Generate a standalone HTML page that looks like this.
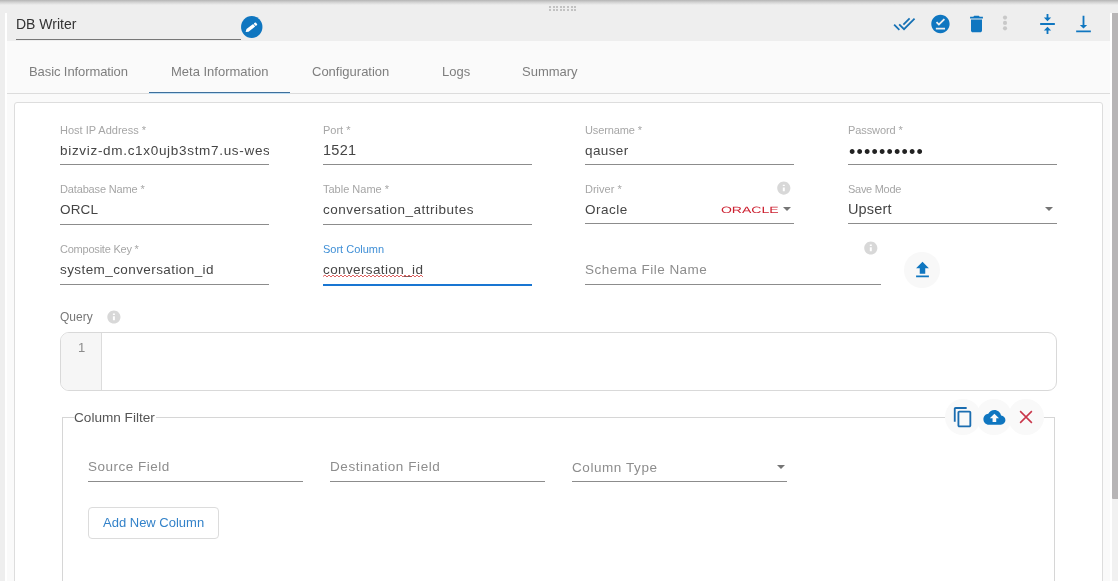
<!DOCTYPE html>
<html><head><meta charset="utf-8"><title>DB Writer</title>
<style>
*{box-sizing:border-box;margin:0;padding:0}
html,body{width:1118px;height:581px;overflow:hidden;background:#eee;font-family:"Liberation Sans",sans-serif;}
.a{position:absolute}
.t{position:absolute;white-space:nowrap;line-height:1;transform-origin:0 0}
.lbl{font-size:11px;color:#a6a6a6}
.val{font-size:13.5px;margin-top:1px;color:#454545}
.ph{font-size:13.5px;margin-top:1px;color:#8d8d8d}
.ul{position:absolute;height:1px;background:#8c8c8c}
.tab{font-size:13px;color:#7e7e7e}

.tri{width:0;height:0;border-left:4px solid transparent;border-right:4px solid transparent;border-top:4px solid #757575}
.info{width:13px;height:13px;border-radius:50%;background:#d0d0d0;color:#fff;text-align:center}
.info i{display:block;font:bold 10px/13px "Liberation Serif",serif;font-style:normal}
</style></head><body><div id="root" style="position:absolute;left:0;top:0;width:1118px;height:581px;will-change:transform">
<!-- top shadow -->
<div class="a" style="left:0;top:0;width:1118px;height:5px;background:linear-gradient(#b4b4b4,#cfcfcf 40%,#eee)"></div>
<!-- white strip -->
<div class="a" style="left:5px;top:13px;width:2px;height:568px;background:#fff"></div>
<!-- panel -->
<div class="a" style="left:7px;top:41px;width:1103px;height:540px;background:#fafafa"></div><div class="a" style="left:1110px;top:13px;width:2px;height:568px;background:#fff"></div>
<!-- drag handle -->
<div class="a" style="left:549.0px;top:6px;width:2px;height:2px;background:#c2c2c2"></div><div class="a" style="left:552.6px;top:6px;width:2px;height:2px;background:#c2c2c2"></div><div class="a" style="left:556.2px;top:6px;width:2px;height:2px;background:#c2c2c2"></div><div class="a" style="left:559.8px;top:6px;width:2px;height:2px;background:#c2c2c2"></div><div class="a" style="left:563.4px;top:6px;width:2px;height:2px;background:#c2c2c2"></div><div class="a" style="left:567.0px;top:6px;width:2px;height:2px;background:#c2c2c2"></div><div class="a" style="left:570.6px;top:6px;width:2px;height:2px;background:#c2c2c2"></div><div class="a" style="left:574.2px;top:6px;width:2px;height:2px;background:#c2c2c2"></div><div class="a" style="left:549.0px;top:9px;width:2px;height:2px;background:#c2c2c2"></div><div class="a" style="left:552.6px;top:9px;width:2px;height:2px;background:#c2c2c2"></div><div class="a" style="left:556.2px;top:9px;width:2px;height:2px;background:#c2c2c2"></div><div class="a" style="left:559.8px;top:9px;width:2px;height:2px;background:#c2c2c2"></div><div class="a" style="left:563.4px;top:9px;width:2px;height:2px;background:#c2c2c2"></div><div class="a" style="left:567.0px;top:9px;width:2px;height:2px;background:#c2c2c2"></div><div class="a" style="left:570.6px;top:9px;width:2px;height:2px;background:#c2c2c2"></div><div class="a" style="left:574.2px;top:9px;width:2px;height:2px;background:#c2c2c2"></div>
<!-- title -->
<div class="t" id="title" style="left:16px;top:17px;font-size:14px;color:#333">DB Writer</div>
<div class="ul" style="left:16px;top:39px;width:225px;background:#777"></div>
<!-- tabs -->
<div class="t tab" id="tab1" style="letter-spacing:-0.09px;left:29px;top:65px">Basic Information</div>
<div class="t tab" id="tab2" style="left:171px;top:65px">Meta Information</div>
<div class="t tab" id="tab3" style="left:312px;top:65px">Configuration</div>
<div class="t tab" id="tab4" style="left:442px;top:65px">Logs</div>
<div class="t tab" id="tab5" style="left:522px;top:65px">Summary</div>
<div class="a" style="left:7px;top:93px;width:1103px;height:1px;background:#dcdcdc"></div>
<div class="a" style="left:149px;top:92px;width:141px;height:1px;background:#3d6f9b"></div><div class="a" style="left:149px;top:93px;width:141px;height:1px;background:#c0def3"></div>
<!-- card -->
<div class="a" style="left:14px;top:102px;width:1089px;height:490px;background:#fff;border:1px solid #dddddd;border-radius:3px"></div>

<!-- edit button -->
<svg class="a" style="left:240px;top:15px" width="24" height="24" viewBox="0 0 24 24"><ellipse cx="11.750" cy="11.950" rx="10.700" ry="11" fill="#0f76c0"/></svg>
<svg class="a" style="left:240px;top:16px;overflow:visible" width="22" height="22" viewBox="0.000 -0.700 22 22"><g transform="rotate(-38 11 11)"><path d="M4.2 11 L6.6 9.3 H15 V12.7 H6.6 Z" fill="#fff"/><rect x="15.6" y="9.3" width="2.4" height="3.4" rx="1" fill="#fff"/></g></svg>
<!-- header icons -->
<svg class="a" style="left:893px;top:13px;overflow:visible" width="22" height="22" viewBox="-0.327 0.000 24 24"><g fill="none" stroke="#1470b4" stroke-width="1.9"><path d="M0.9 12.6 L6.6 18.3"/><path d="M6.4 12.4 L11.7 17.7 L23.2 6.2"/><path d="M11 12.700 L17.800 5.900"/></g></svg>
<svg class="a" style="left:929px;top:13px;overflow:visible" width="22" height="22" viewBox="-0.491 0.000 24 24"><path fill="#0f76c0" d="M12 2C6.5 2 2 6.5 2 12s4.500 10 10 10 10-4.500 10-10S17.500 2 12 2zm5 16H7v-2h10v2zm-6.700-4L7 10.700l1.400-1.400 1.900 1.900 5.300-5.300L17 7.300 10.300 14z"/></svg>
<svg class="a" style="left:965px;top:13px;overflow:visible" width="22" height="22" viewBox="-0.545 0.000 24 24"><path fill="#0f76c0" d="M6 19c0 1.100.9 2 2 2h8c1.100 0 2-.9 2-2V7H6v12zM19 4h-3.500l-1-1h-5l-1 1H5v2h14V4z"/></svg>
<svg class="a" style="left:994px;top:12px" width="22" height="22" viewBox="0 0 24 24"><g fill="#c8c8c8"><circle cx="12" cy="6.100" r="2.250"/><circle cx="12" cy="11.900" r="2.250"/><circle cx="12" cy="17.800" r="2.250"/></g></svg>
<svg class="a" style="left:1036px;top:13px;overflow:visible" width="22" height="22" viewBox="-0.545 0.000 24 24"><path fill="#0f76c0" d="M8 19h3v4h2v-4h3l-4-4-4 4zm8-14h-3V1h-2v4H8l4 4 4-4zM4 11v2h16v-2H4z"/></svg>
<svg class="a" style="left:1072px;top:13px;overflow:visible" width="22" height="22" viewBox="-0.545 0.000 24 24"><path fill="#0f76c0" d="M16 13h-3V3h-2v10H8l4 4 4-4zM4 19v2h16v-2H4z"/></svg>

<!-- row 1 -->
<div class="t lbl" id="l1" style="left:60px;top:124.500px">Host IP Address *</div>
<div class="a" style="left:60px;top:140px;width:209px;height:22px;overflow:hidden"><div class="t val" id="v1" style="letter-spacing:0.689px;left:0;top:3px">bizviz-dm.c1x0ujb3stm7.us-wes</div></div>
<div class="ul" style="left:60px;top:164px;width:209px"></div>
<div class="t lbl" id="l2" style="left:323px;top:124.500px">Port *</div>
<div class="t val" id="v2" style="letter-spacing:0.300px;font-size:14.5px;margin-top:0;left:323px;top:143px">1521</div>
<div class="ul" style="left:323px;top:164px;width:209px"></div>
<div class="t lbl" id="l3" style="letter-spacing:-0.12px;left:585px;top:124.500px">Username *</div>
<div class="t val" id="v3" style="letter-spacing:0.400px;left:585px;top:143px">qauser</div>
<div class="ul" style="left:585px;top:164px;width:209px"></div>
<div class="t lbl" id="l4" style="letter-spacing:-0.1px;left:848px;top:124.500px">Password *</div>
<div class="t" id="v4" style="left:849.05px;top:142.800px;font-size:18px;letter-spacing:1.2px;color:#222">••••••••••</div>
<div class="ul" style="left:848px;top:164px;width:209px"></div>
<!-- row 2 -->
<div class="t lbl" id="l5" style="letter-spacing:-0.15px;left:60px;top:183.500px">Database Name *</div>
<div class="t val" id="v5" style="letter-spacing:0.133px;left:60px;top:202px">ORCL</div>
<div class="ul" style="left:60px;top:224px;width:209px"></div>
<div class="t lbl" id="l6" style="left:323px;top:183.500px">Table Name *</div>
<div class="t val" id="v6" style="letter-spacing:0.495px;left:323px;top:202px">conversation_attributes</div>
<div class="ul" style="left:323px;top:224px;width:209px"></div>
<div class="t lbl" id="l7" style="left:585px;top:183.500px">Driver *</div>
<div class="t val" id="v7" style="letter-spacing:0.500px;left:585px;top:202px">Oracle</div>
<div class="ul" style="left:585px;top:223px;width:209px"></div>
<svg class="a" style="left:720px;top:203px" width="60" height="12" viewBox="0 0 60 12"><text id="oracle" text-rendering="geometricPrecision" transform="translate(0.9,9.700) scale(0.3514,0.2291)" font-family="Liberation Sans,sans-serif" font-size="40" fill="#cc1f2f">ORACLE</text></svg>
<div class="a tri" style="left:783px;top:207px"></div>
<svg class="a" style="left:775px;top:180px;overflow:visible" width="16" height="16" viewBox="-1.367 -0.228 24.304 24.304"><path fill="#d8d8d8" d="M12 2C6.480 2 2 6.480 2 12s4.480 10 10 10 10-4.480 10-10S17.520 2 12 2zm1.500 15h-3v-6h3v6zm0-8h-3V6.800h3V9z"/></svg>
<div class="t lbl" id="l8" style="letter-spacing:-0.28px;left:848px;top:183.500px">Save Mode</div>
<div class="t val" id="v8" style="letter-spacing:0.150px;font-size:14.5px;margin-top:0;left:848px;top:202px">Upsert</div>
<div class="ul" style="left:848px;top:223px;width:209px"></div>
<div class="a tri" style="left:1045px;top:207px"></div>
<!-- row 3 -->
<div class="t lbl" id="l9" style="letter-spacing:-0.22px;left:60px;top:243.500px">Composite Key *</div>
<div class="t val" id="v9" style="letter-spacing:0.414px;left:60px;top:262px">system_conversation_id</div>
<div class="ul" style="left:60px;top:284px;width:209px"></div>
<div class="t lbl" id="l10" style="left:323px;top:243.500px;color:#3f8fd6">Sort Column</div>
<div class="t val" id="v10" style="letter-spacing:0.386px;left:323px;top:262px">conversation_id</div>
<svg class="a" style="left:323px;top:274px" width="101" height="4" viewBox="0 0 101 4"><path id="wavy" fill="none" stroke="#d63a3a" stroke-width="0.8" d="M0 2.5 L2 1 L4 3 L6 1 L8 3 L10 1 L12 3 L14 1 L16 3 L18 1 L20 3 L22 1 L24 3 L26 1 L28 3 L30 1 L32 3 L34 1 L36 3 L38 1 L40 3 L42 1 L44 3 L46 1 L48 3 L50 1 L52 3 L54 1 L56 3 L58 1 L60 3 L62 1 L64 3 L66 1 L68 3 L70 1 L72 3 L74 1 L76 3 L78 1 L80 3 L82 1 L84 3 L86 1 L88 3 L90 1 L92 3 L94 1 L96 3 L98 1 L100 3"/></svg>
<div class="a" style="left:323px;top:284px;width:209px;height:2px;background:#1976d2"></div>
<div class="t ph" id="v11" style="letter-spacing:0.467px;left:585px;top:262px">Schema File Name</div>
<div class="ul" style="left:585px;top:284px;width:296px"></div>
<svg class="a" style="left:862px;top:240px;overflow:visible" width="16" height="16" viewBox="-1.367 -0.152 24.304 24.304"><path fill="#d8d8d8" d="M12 2C6.480 2 2 6.480 2 12s4.480 10 10 10 10-4.480 10-10S17.520 2 12 2zm1.500 15h-3v-6h3v6zm0-8h-3V6.800h3V9z"/></svg>
<div class="a" style="left:904px;top:252px;width:36px;height:36px;border-radius:50%;background:#f8f8f8"></div>
<svg class="a" style="left:911px;top:259px;overflow:visible" width="22" height="22" viewBox="-0.545 0.000 24 24"><path fill="#0f76c0" d="M9 16h6v-6h4l-7-7-7 7h4zm-4 2h14v2H5z"/></svg>
<!-- query -->
<div class="t" id="q" style="left:60px;top:311px;font-size:12px;color:#777">Query</div>
<svg class="a" style="left:106px;top:309px;overflow:visible" width="16" height="16" viewBox="-0.000 -0.152 24.304 24.304"><path fill="#d8d8d8" d="M12 2C6.480 2 2 6.480 2 12s4.480 10 10 10 10-4.480 10-10S17.520 2 12 2zm1.500 15h-3v-6h3v6zm0-8h-3V6.800h3V9z"/></svg>
<div class="a" style="left:60px;top:332px;width:997px;height:59px;border:1px solid #d9d9d9;border-radius:9px;background:#fff;overflow:hidden"><div class="a" style="left:0;top:0;width:41px;height:57px;background:#f6f6f6;border-right:1px solid #dcdcdc"></div></div>
<div class="t" id="ln" style="left:78px;top:340.500px;font-size:13px;color:#8c8c8c">1</div>
<!-- fieldset -->
<div class="a" style="left:62px;top:417px;width:993px;height:180px;border:1px solid #d6d6d6"></div>
<div class="a" style="left:74px;top:410px;width:81.500px;height:14px;background:#fff"></div>
<div class="t" id="leg" style="left:74px;top:410.500px;font-size:13.6px;color:#555">Column Filter</div>
<div class="a" style="left:945px;top:399px;width:36px;height:36px;border-radius:50%;background:#f9f9f9"></div>
<div class="a" style="left:976.2px;top:399px;width:36px;height:36px;border-radius:50%;background:#f9f9f9"></div>
<div class="a" style="left:1008px;top:399px;width:36px;height:36px;border-radius:50%;background:#f9f9f9"></div>
<svg class="a" style="left:952px;top:406px;overflow:visible" width="22" height="22" viewBox="0.000 -0.218 24 24"><path fill="#1b6db0" d="M16 1H4c-1.100 0-2 .9-2 2v14h2V3h12V1zm3 4H8c-1.100 0-2 .9-2 2v14c0 1.100.9 2 2 2h11c1.100 0 2-.9 2-2V7c0-1.100-.9-2-2-2zm0 16H8V7h11v14z"/></svg>
<svg class="a" style="left:983px;top:406px;overflow:visible" width="22" height="22" viewBox="-0.436 -0.327 24 24"><path fill="#0f76c0" d="M19.350 10.040C18.670 6.590 15.640 4 12 4 9.110 4 6.600 5.640 5.350 8.040 2.340 8.360 0 10.910 0 14c0 3.310 2.690 6 6 6h13c2.760 0 5-2.240 5-5 0-2.640-2.050-4.780-4.650-4.960zM14 13v4h-4v-4H7l5-5 5 5h-3z"/></svg>
<svg class="a" style="left:1015px;top:406px" width="22" height="22" viewBox="0 0 24 24"><path fill="none" stroke="#c9364a" stroke-width="1.700" d="M5.600 5.600 L18.400 18.400 M18.400 5.600 L5.600 18.400"/></svg>
<!-- fields -->
<div class="t ph" id="f1" style="letter-spacing:0.491px;left:88px;top:459px">Source Field</div>
<div class="ul" style="left:88px;top:481px;width:215px"></div>
<div class="t ph" id="f2" style="letter-spacing:0.581px;left:330px;top:459px">Destination Field</div>
<div class="ul" style="left:330px;top:481px;width:215px"></div>
<div class="t ph" id="f3" style="letter-spacing:0.570px;left:572px;top:460px">Column Type</div>
<div class="ul" style="left:572px;top:481px;width:215px"></div>
<div class="a tri" style="left:777px;top:465px"></div>
<!-- button -->
<div class="a" style="left:88px;top:507px;width:131px;height:32px;border:1px solid #dcdcdc;border-radius:4px;background:#fff"></div>
<div class="t" id="btn" style="left:103px;top:516px;font-size:13px;color:#3382c9">Add New Column</div>
<!-- scrollbar -->
<div class="a" style="left:1112px;top:13px;width:6px;height:568px;background:#f1f1f1"></div>
<div class="a" style="left:1112px;top:13px;width:6px;height:485.500px;background:#b7b5b6;border-radius:0 0 0 1px"></div>
</div></body></html>
